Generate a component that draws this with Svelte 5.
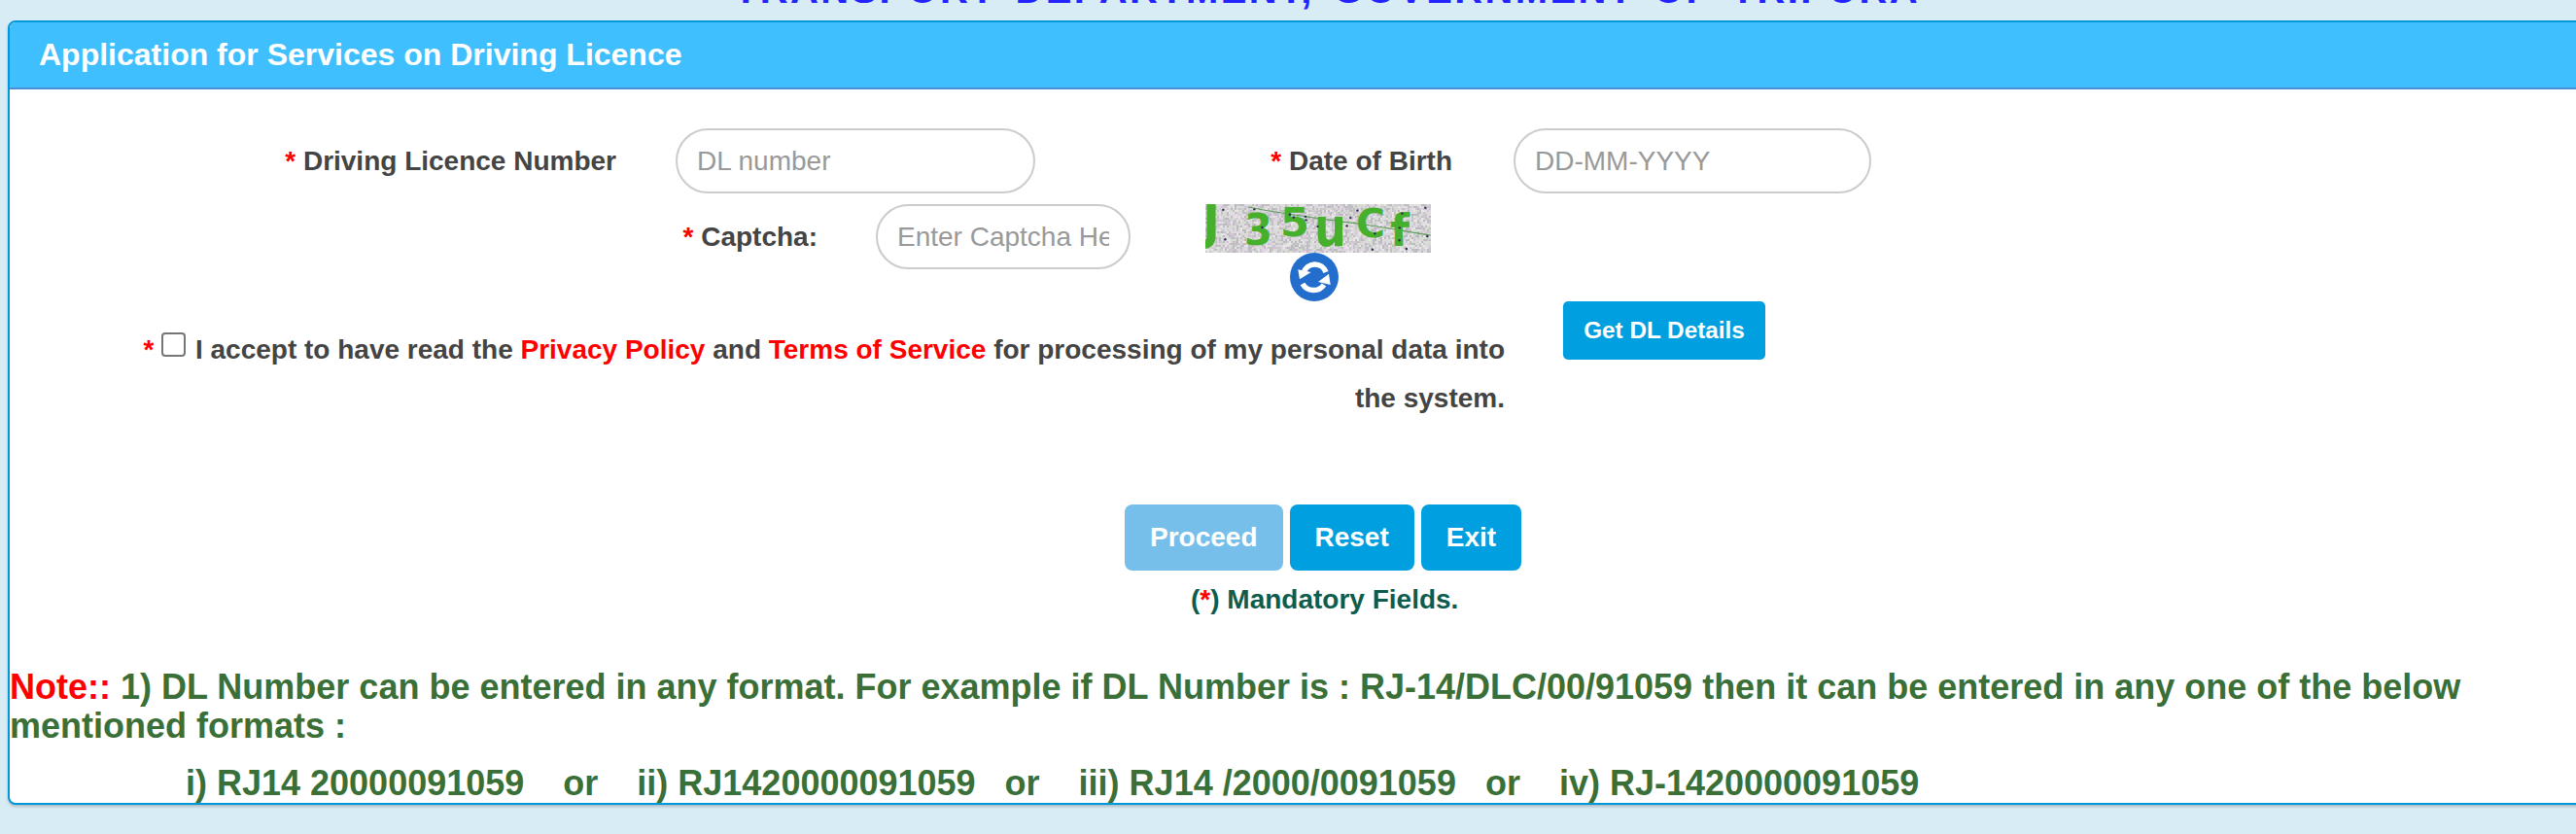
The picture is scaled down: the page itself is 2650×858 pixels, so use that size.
<script lang="ts">
	// seeded noise so the captcha looks the same on every run
	let seed = 41;
	const rnd = () => {
		seed = (seed * 16807) % 2147483647;
		return seed / 2147483647;
	};
	const shades = ['#cfcbd2', '#dedade', '#c2bfc4', '#e8e6e8', '#cdc3d2', '#d6dccd', '#b8babc', '#e2d6e2', '#d9ddd9'];
	const cells: { x: number; y: number; c: string }[] = [];
	for (let y = 0; y < 50; y += 2) {
		for (let x = 0; x < 232; x += 2) {
			cells.push({ x, y, c: shades[Math.floor(rnd() * shades.length)] });
		}
	}
	const dots = Array.from({ length: 20 }, () => ({ x: rnd() * 232, y: rnd() * 50 }));

	const letters = [
		{ ch: 'J', x: -3, y: 36, size: 50, w: 18 },
		{ ch: '3', x: 40, y: 42, size: 44, w: 29 },
		{ ch: '5', x: 77, y: 33, size: 41, w: 30 },
		{ ch: 'u', x: 112, y: 43, size: 55, w: 33 },
		{ ch: 'C', x: 155, y: 34, size: 40, w: 30 },
		{ ch: 'f', x: 190, y: 43, size: 46, w: 20 }
	];

	let accepted = $state(false);
</script>

<div class="page">
	<h1 class="dept">TRANSPORT DEPARTMENT, GOVERNMENT OF TRIPURA</h1>

	<section class="panel">
		<header class="panel-head">Application for Services on Driving Licence</header>

		<div class="panel-body">
			<div class="row row-dl">
				<label class="lbl lbl-dl" for="dl"><span class="req">*</span> Driving Licence Number</label>
				<input id="dl" class="pill pill-dl" type="text" placeholder="DL number" />
				<label class="lbl lbl-dob" for="dob"><span class="req">*</span> Date of Birth</label>
				<input id="dob" class="pill pill-dob" type="text" placeholder="DD-MM-YYYY" />
			</div>

			<div class="row row-captcha">
				<label class="lbl lbl-captcha" for="cap"><span class="req">*</span> Captcha:</label>
				<input id="cap" class="pill pill-cap" type="text" placeholder="Enter Captcha Here" />
				<div class="captcha">
					<svg class="captcha-img" viewBox="0 0 232 50" width="232" height="50" role="img" aria-label="captcha">
						{#each cells as cell}
							<rect x={cell.x} y={cell.y} width="2" height="2" fill={cell.c} />
						{/each}
						<path d="M44 3 C90 12 130 16 170 22 S215 30 232 32" fill="none" stroke="#5f9e5a" stroke-width="1.2" />
						{#each letters as l}
							<text
								x={l.x}
								y={l.y}
								font-size={l.size}
								textLength={l.w}
								lengthAdjust="spacingAndGlyphs"
								class="captcha-ch">{l.ch}</text>
						{/each}
						{#each dots as d}
							<circle cx={d.x} cy={d.y} r="1.2" fill="#2a2a55" />
						{/each}
					</svg>
					<button class="refresh" type="button" aria-label="Refresh captcha">
						<svg viewBox="0 0 50 50" width="50" height="50">
							<circle cx="25" cy="25" r="25" fill="#236dcc" />
							<path d="M14 21 A12 12 0 0 1 37 20" fill="none" stroke="#fff" stroke-width="5.5" />
							<polygon points="8.3,17.3 21.7,20 10,27.3" fill="#fff" />
							<path d="M13 32 A13 13 0 0 0 35 33" fill="none" stroke="#fff" stroke-width="5.5" />
							<polygon points="41.7,33 29,30 40,21.7" fill="#fff" />
						</svg>
					</button>
				</div>
			</div>

			<div class="row row-consent">
				<p class="consent">
					<span class="req">*</span>
					<input class="check" type="checkbox" bind:checked={accepted} />
					I accept to have read the <a href="#privacy">Privacy Policy</a> and
					<a href="#terms">Terms of Service</a> for processing of my personal data into the system.
				</p>
				<button class="btn btn-get" type="button">Get DL Details</button>
			</div>

			<div class="actions">
				<button class="btn btn-lg btn-off" type="button">Proceed</button>
				<button class="btn btn-lg" type="button">Reset</button>
				<button class="btn btn-lg" type="button">Exit</button>
			</div>
			<p class="mandatory">(<span class="req">*</span>) Mandatory Fields.</p>

			<div class="note">
				<p><span class="note-tag">Note::</span> 1) DL Number can be entered in any format. For example if DL Number is : RJ-14/DLC/00/91059 then it can be entered in any one of the below mentioned formats :</p>
				<p class="formats">i) RJ14 20000091059 &nbsp;&nbsp; or &nbsp;&nbsp; ii) RJ1420000091059 &nbsp; or &nbsp;&nbsp; iii) RJ14 /2000/0091059 &nbsp; or &nbsp;&nbsp; iv) RJ-1420000091059</p>
			</div>
		</div>
	</section>
</div>

<style>
	:global(body) {
		margin: 0;
		background: #d8ecf6;
		overflow: hidden;
	}

	.page {
		height: 858px;
		font-family: "Liberation Sans", Arial, sans-serif;
		overflow: hidden;
	}

	.dept {
		margin: -31px 0 0;
		height: 52px;
		line-height: 40px;
		padding-left: 755px;
		font-size: 40px;
		font-weight: 700;
		color: #2323ff;
		letter-spacing: 2.35px;
		word-spacing: 6px;
		white-space: nowrap;
	}

	.panel {
		margin: 0 -10px 0 8px;
		height: 807px;
		box-sizing: border-box;
		background: #fff;
		border: 2px solid #0098d8;
		border-radius: 8px;
		box-shadow: 0 2px 3px rgba(0, 0, 0, 0.2);
	}

	.panel-head {
		height: 67px;
		box-sizing: content-box;
		padding-left: 30px;
		background: #40bfff;
		border-bottom: 2px solid #4a90d8;
		border-radius: 6px 6px 0 0;
		color: #fff;
		font-size: 32px;
		font-weight: 700;
		line-height: 67px;
	}

	.panel-body {
		padding-top: 40px;
		color: #444;
		font-size: 28px;
		font-weight: 700;
	}

	.row {
		display: flex;
		align-items: flex-start;
	}

	.lbl {
		flex: none;
		text-align: right;
		line-height: 67px;
	}

	.lbl-dl {
		width: 624px;
		margin-right: 61px;
	}

	.lbl-dob {
		width: 429px;
		margin-right: 63px;
	}

	.lbl-captcha {
		width: 831px;
		margin-right: 60px;
	}

	.req {
		color: #f00;
	}

	.pill {
		flex: none;
		height: 67px;
		box-sizing: border-box;
		padding: 0 20px;
		border: 2px solid #ccc;
		border-radius: 34px;
		background: #fff;
		font-family: inherit;
		font-size: 28px;
		color: #444;
	}

	.pill::placeholder {
		color: #999;
		opacity: 1;
	}

	.pill-dl {
		width: 370px;
	}

	.pill-dob {
		width: 368px;
	}

	.pill-cap {
		width: 262px;
	}

	.row-captcha {
		margin-top: 11px;
	}

	.captcha {
		flex: none;
		width: 232px;
		margin-left: 77px;
		display: flex;
		flex-direction: column;
		align-items: center;
	}

	.captcha-img {
		display: block;
	}

	.captcha-ch {
		fill: #46b02c;
		font-family: "DejaVu Sans", sans-serif;
		font-weight: 700;
	}

	.refresh {
		display: block;
		width: 50px;
		height: 50px;
		margin: 0 8px 0 0;
		padding: 0;
		border: 0;
		background: none;
	}

	.refresh svg {
		display: block;
	}

	.consent {
		flex: none;
		box-sizing: border-box;
		width: 1538px;
		margin: 0;
		padding: 25px 0 0 120px;
		line-height: 50px;
		text-align: right;
	}

	.consent a {
		color: #f00;
		text-decoration: none;
	}

	.check {
		appearance: none;
		width: 25px;
		height: 25px;
		margin: 0 2px 0 0;
		vertical-align: 2px;
		box-sizing: border-box;
		border: 2px solid #767676;
		border-radius: 4px;
		background: #fff;
	}

	.btn {
		flex: none;
		border: 0;
		border-radius: 5px;
		background: #00a0e0;
		color: #fff;
		font-family: inherit;
		font-weight: 700;
	}

	.btn-get {
		width: 208px;
		height: 60px;
		margin-left: 60px;
		padding: 0;
		font-size: 24.3px;
	}

	.actions {
		display: flex;
		gap: 7px;
		margin-top: 84px;
		padding-left: 1147px;
	}

	.btn-lg {
		height: 68px;
		padding: 0 26px;
		border-radius: 8px;
		font-size: 28px;
	}

	.btn-off {
		background: #76bfea;
	}

	.mandatory {
		margin: 14px 0 0;
		padding-left: 1215px;
		color: #0e5c4d;
		line-height: 32px;
	}

	.note {
		margin-top: 54px;
		color: #3a7038;
		font-size: 36px;
		line-height: 40px;
	}

	.note p {
		margin: 0;
	}

	.note-tag {
		color: #f00;
	}

	.formats {
		padding: 19px 0 0 181px;
	}
</style>
